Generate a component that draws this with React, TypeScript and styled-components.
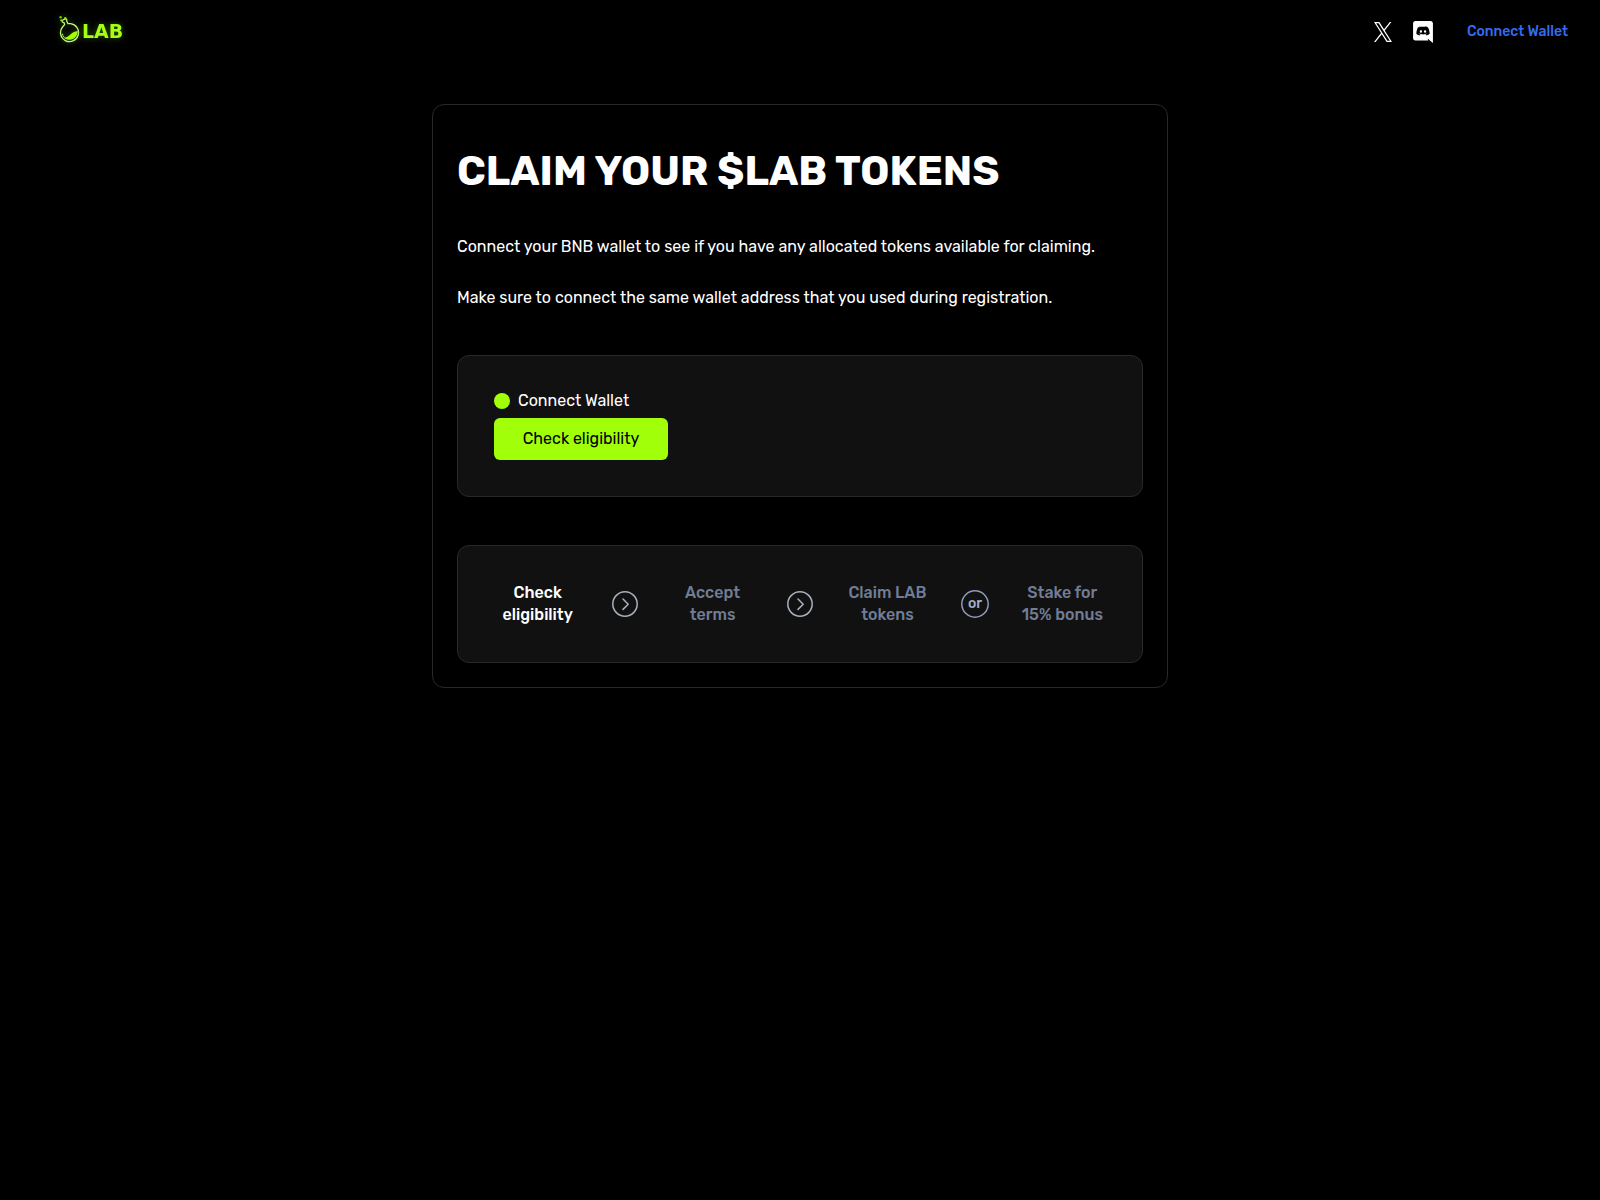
import React from "react";
import styled, { createGlobalStyle } from "styled-components";

const GlobalStyle = createGlobalStyle`
  * { box-sizing: border-box; }
  body {
    margin: 0;
    background: #000;
    color: #fff;
    font-family: Rubik, Roboto, "Open Sans", sans-serif;
    font-size: 16px;
    line-height: 19px;
  }
  h1, p, ol { margin: 0; padding: 0; }
`;

const Header = styled.header`
  display: flex;
  align-items: center;
  justify-content: space-between;
  height: 64px;
  padding: 0 32px 0 58px;
`;

const Logo = styled.a`
  display: flex;
  align-items: center;
  padding-bottom: 6px;
  color: #a6ff12;
  text-decoration: none;
  filter: drop-shadow(0 0 3px rgba(140, 255, 0, 0.35));
`;

const LogoText = styled.span`
  padding-top: 4px;
  font-family: "DejaVu Sans", sans-serif;
  font-size: 19px;
  font-weight: 700;
  line-height: 20px;
`;

const Nav = styled.nav`
  display: flex;
  align-items: center;
`;

const SocialLink = styled.a`
  display: flex;
  align-items: center;
  justify-content: center;
  width: 40px;
  height: 24px;
  color: #fff;
`;

const WalletButton = styled.button`
  margin-left: 24px;
  padding: 0 0 2px;
  border: 0;
  background: none;
  color: #346cf0;
  font: inherit;
  font-size: 14px;
  font-weight: 500;
  cursor: pointer;
`;

const Card = styled.main`
  max-width: 736px;
  margin: 40px auto 0;
  padding: 24px;
  border: 1px solid #282828;
  border-radius: 12px;
`;

const Title = styled.h1`
  padding: 18px 0 42px;
  font-size: 41px;
  font-weight: 700;
  line-height: 48px;
`;

const Copy = styled.div`
  display: flex;
  flex-direction: column;
  gap: 32px;
  margin-bottom: 48px;
`;

const Panel = styled.section`
  padding: 36px;
  border: 1px solid #282828;
  border-radius: 12px;
  background: #111;

  & + & { margin-top: 48px; }
`;

const Status = styled.div`
  display: flex;
  align-items: center;
  gap: 8px;
  height: 18px;
  margin-bottom: 8px;
`;

const StatusText = styled.span`
  padding-bottom: 2px;
`;

const Dot = styled.span`
  width: 16px;
  height: 16px;
  border-radius: 50%;
  background: #a1ff0a;
`;

const EligibilityButton = styled.button`
  display: block;
  min-width: 174px;
  height: 42px;
  padding: 0 28px 2px;
  border: 0;
  border-radius: 6px;
  background: #a1ff0a;
  color: #000;
  font: inherit;
  cursor: pointer;
`;

const Steps = styled.ol`
  display: grid;
  grid-template-columns: repeat(7, 1fr);
  align-items: center;
  justify-items: center;
  list-style: none;
`;

const Step = styled.li<{ $active?: boolean }>`
  color: ${({ $active }) => ($active ? "#fff" : "#717d96")};
  font-weight: 500;
  line-height: 22px;
  text-align: center;
`;

const Divider = styled.li`
  display: flex;
  color: #a9b1bd;
`;

const Flask = () => (
  <svg width="24" height="28" viewBox="0 0 24 28" fill="none" aria-hidden="true">
    <path d="M4.500 12 6.600 9.600 6.200 7.800 4.300 7 4 5.500 7.500 3.600 8.700 4.500 8.800 6.500 10 8.600 12.500 8.700a9 9 0 1 1-8 3.300Z" stroke="#c4f57c" strokeWidth="1.300" strokeLinejoin="round" />
    <path d="M5.500 22.300c6 1.500 6.500-5.800 14.200-6.300.2 4.800-3.200 8.500-8.200 8.700-2.600.1-4.800-.8-6-2.400Z" fill="#a1ff0a" />
    <circle cx="2.600" cy="2.200" r="1.200" fill="#6fc400" />
    <circle cx="7.200" cy="3.200" r="1.200" fill="#8fe60a" />
    <circle cx="3.200" cy="5.200" r="1" fill="#8fe60a" />
    <path d="M4.300 18.500a7.500 7.500 0 0 0 2 4" stroke="#a1ff0a" strokeWidth="1" />
  </svg>
);

const XIcon = () => (
  <svg width="18" height="20" viewBox="0 0 1200 1227" preserveAspectRatio="none" fill="currentColor" aria-hidden="true">
    <path d="M714.163 519.284L1160.89 0H1055.03L667.137 450.887L357.328 0H0L468.492 681.821L0 1226.37H105.866L515.491 750.218L842.672 1226.37H1200L714.137 519.284H714.163ZM569.165 687.828L521.697 619.934L144.011 79.6944H306.615L611.412 515.685L658.88 583.579L1055.08 1150.3H892.476L569.165 687.854V687.828Z" />
  </svg>
);

const DiscordIcon = () => (
  <svg width="22" height="22" viewBox="0 0 24 24" fill="currentColor" aria-hidden="true">
    <path d="M20.222 0c1.406 0 2.54 1.137 2.607 2.475V24l-2.677-2.273-1.47-1.338-1.604-1.398.67 2.205H3.71c-1.402 0-2.54-1.065-2.54-2.476V2.48C1.17 1.142 2.31.003 3.715.003h16.5L20.222 0zm-6.118 5.683h-.03l-.202.2c2.073.6 3.076 1.537 3.076 1.537-1.336-.668-2.54-1.002-3.744-1.137-.87-.135-1.74-.064-2.475 0h-.2c-.47 0-1.47.2-2.81.735-.467.203-.735.336-.735.336s1.002-1.002 3.21-1.537l-.135-.135s-1.672-.064-3.477 1.27c0 0-1.805 3.144-1.805 7.02 0 0 1 1.74 3.743 1.806 0 0 .4-.533.805-1.002-1.54-.468-2.14-1.404-2.14-1.404s.134.066.335.2h.06c.03 0 .044.015.06.03v.006c.016.016.03.03.06.03.33.136.66.27.93.4.466.202 1.065.403 1.8.536.93.135 1.996.2 3.21 0 .6-.135 1.2-.267 1.8-.535.39-.2.87-.4 1.397-.737 0 0-.6.936-2.205 1.404.33.466.795 1 .795 1 2.744-.06 3.81-1.8 3.87-1.726 0-3.87-1.815-7.02-1.815-7.02-1.635-1.214-3.165-1.26-3.435-1.26l.056-.02zm.168 4.413c.703 0 1.27.6 1.27 1.335 0 .74-.57 1.34-1.27 1.34-.7 0-1.27-.6-1.27-1.334.002-.74.573-1.338 1.27-1.338zm-4.543 0c.7 0 1.266.6 1.266 1.335 0 .74-.57 1.34-1.27 1.34-.7 0-1.27-.6-1.27-1.334 0-.74.57-1.338 1.27-1.338z" />
  </svg>
);

const ChevronIcon = () => (
  <svg width="26" height="26" viewBox="0 0 26 26" fill="none" stroke="currentColor" strokeWidth="1.500" strokeLinecap="round" strokeLinejoin="round" aria-hidden="true">
    <circle cx="13" cy="13" r="12.200" />
    <path d="m11 8 5.200 5.200L11 18.400" />
  </svg>
);

const OrIcon = () => (
  <svg width="28" height="28" viewBox="0 0 28 28" fill="none">
    <circle cx="14" cy="14" r="13.200" stroke="#8f9bb8" strokeWidth="1.500" />
    <text x="14" y="18" textAnchor="middle" fontSize="14" fontWeight="500" fill="#a0aec9">or</text>
  </svg>
);

export default function App() {
  return (
    <>
      <GlobalStyle />
      <Header>
        <Logo href="#">
          <Flask />
          <LogoText>LAB</LogoText>
        </Logo>
        <Nav>
          <SocialLink href="#x" aria-label="X"><XIcon /></SocialLink>
          <SocialLink href="#discord" aria-label="Discord"><DiscordIcon /></SocialLink>
          <WalletButton type="button">Connect Wallet</WalletButton>
        </Nav>
      </Header>
      <Card>
        <Title>CLAIM YOUR $LAB TOKENS</Title>
        <Copy>
          <p>Connect your BNB wallet to see if you have any allocated tokens available for claiming.</p>
          <p>Make sure to connect the same wallet address that you used during registration.</p>
        </Copy>
        <Panel>
          <Status><Dot /><StatusText>Connect Wallet</StatusText></Status>
          <EligibilityButton type="button">Check eligibility</EligibilityButton>
        </Panel>
        <Panel>
          <Steps>
            <Step $active>Check eligibility</Step>
            <Divider><ChevronIcon /></Divider>
            <Step>Accept<br />terms</Step>
            <Divider><ChevronIcon /></Divider>
            <Step>Claim LAB tokens</Step>
            <Divider><OrIcon /></Divider>
            <Step>Stake for 15% bonus</Step>
          </Steps>
        </Panel>
      </Card>
    </>
  );
}
